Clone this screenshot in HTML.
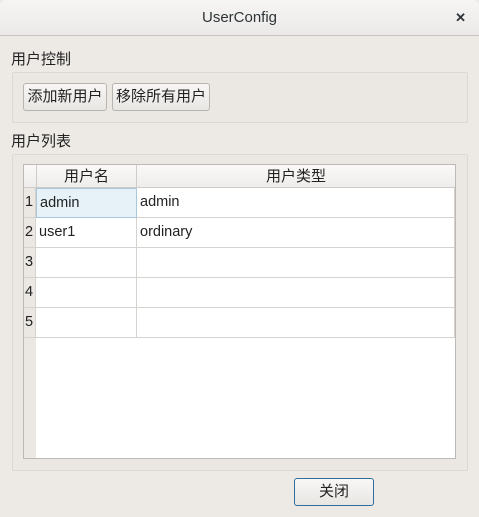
<!DOCTYPE html>
<html><head><style>
*{box-sizing:border-box;margin:0;padding:0}
body{width:479px;height:517px;background:#edeae6;font-family:"Liberation Sans","Noto Sans CJK SC",sans-serif;font-size:15px;color:#222;position:relative;overflow:hidden}
.abs{position:absolute}
.title{left:0;top:0;width:479px;height:36px;background:linear-gradient(#f6f5f4,#eceae8);border-bottom:1px solid #c8c4bf;border-radius:6px 6px 0 0;text-align:center;line-height:36px;font-size:15px;color:#2e3436}
.grp{border:1px solid #dcd8d3;background:#ebe8e4;border-radius:2px}
.btn{border:1px solid #b8b4af;background:linear-gradient(#f8f7f6,#e8e6e3);border-radius:3px;text-align:center;line-height:25px;font-size:15px}
.cell{position:absolute;border-right:1px solid #d6d3cf;border-bottom:1px solid #d6d3cf;line-height:29px;padding-left:3px;font-size:14.5px}
</style></head><body>
<div class="abs title">UserConfig<span style="position:absolute;right:13px;top:0;font-size:13px;font-weight:bold">✕</span></div>
<div class="abs" style="left:11px;top:48px">用户控制</div>
<div class="abs grp" style="left:12px;top:72px;width:456px;height:51px"></div>
<div class="abs btn" style="left:23px;top:83px;width:84px;height:28px">添加新用户</div>
<div class="abs btn" style="left:112px;top:83px;width:98px;height:28px">移除所有用户</div>
<div class="abs" style="left:11px;top:130px">用户列表</div>
<div class="abs grp" style="left:12px;top:154px;width:456px;height:317px"></div>
<div class="abs" style="left:23px;top:164px;width:433px;height:295px;background:#fff;border:1px solid #bdb9b4"></div>
<div class="abs" style="left:24px;top:188px;width:12px;height:270px;background:#ebe8e4"></div>
<div class="abs" style="left:24px;top:165px;width:431px;height:23px;background:linear-gradient(#faf9f8,#efedeb);border-bottom:1px solid #cfcbc6"></div>
<div class="abs" style="left:36px;top:165px;width:101px;height:23px;border-left:1px solid #cfcbc6;border-right:1px solid #cfcbc6;text-align:center;line-height:23px">用户名</div>
<div class="abs" style="left:137px;top:165px;width:318px;height:23px;text-align:center;line-height:23px">用户类型</div>
<div class="cell" style="left:24px;top:188px;width:12px;height:30px;padding-left:1px;background:#ebe8e4">1</div>
<div class="cell" style="left:36px;top:188px;width:101px;height:30px;background:#e6f1f8;border:1px solid #a9c7dd">admin</div>
<div class="cell" style="left:137px;top:188px;width:318px;height:30px">admin</div>
<div class="cell" style="left:24px;top:218px;width:12px;height:30px;padding-left:1px;background:#ebe8e4">2</div>
<div class="cell" style="left:36px;top:218px;width:101px;height:30px">user1</div>
<div class="cell" style="left:137px;top:218px;width:318px;height:30px">ordinary</div>
<div class="cell" style="left:24px;top:248px;width:12px;height:30px;padding-left:1px;background:#ebe8e4">3</div>
<div class="cell" style="left:36px;top:248px;width:101px;height:30px"></div>
<div class="cell" style="left:137px;top:248px;width:318px;height:30px"></div>
<div class="cell" style="left:24px;top:278px;width:12px;height:30px;padding-left:1px;background:#ebe8e4">4</div>
<div class="cell" style="left:36px;top:278px;width:101px;height:30px"></div>
<div class="cell" style="left:137px;top:278px;width:318px;height:30px"></div>
<div class="cell" style="left:24px;top:308px;width:12px;height:30px;padding-left:1px;background:#ebe8e4">5</div>
<div class="cell" style="left:36px;top:308px;width:101px;height:30px"></div>
<div class="cell" style="left:137px;top:308px;width:318px;height:30px"></div>
<div class="abs btn" style="left:294px;top:478px;width:80px;height:28px;border-color:#2f6f9f;line-height:26px">关闭</div>
</body></html>
